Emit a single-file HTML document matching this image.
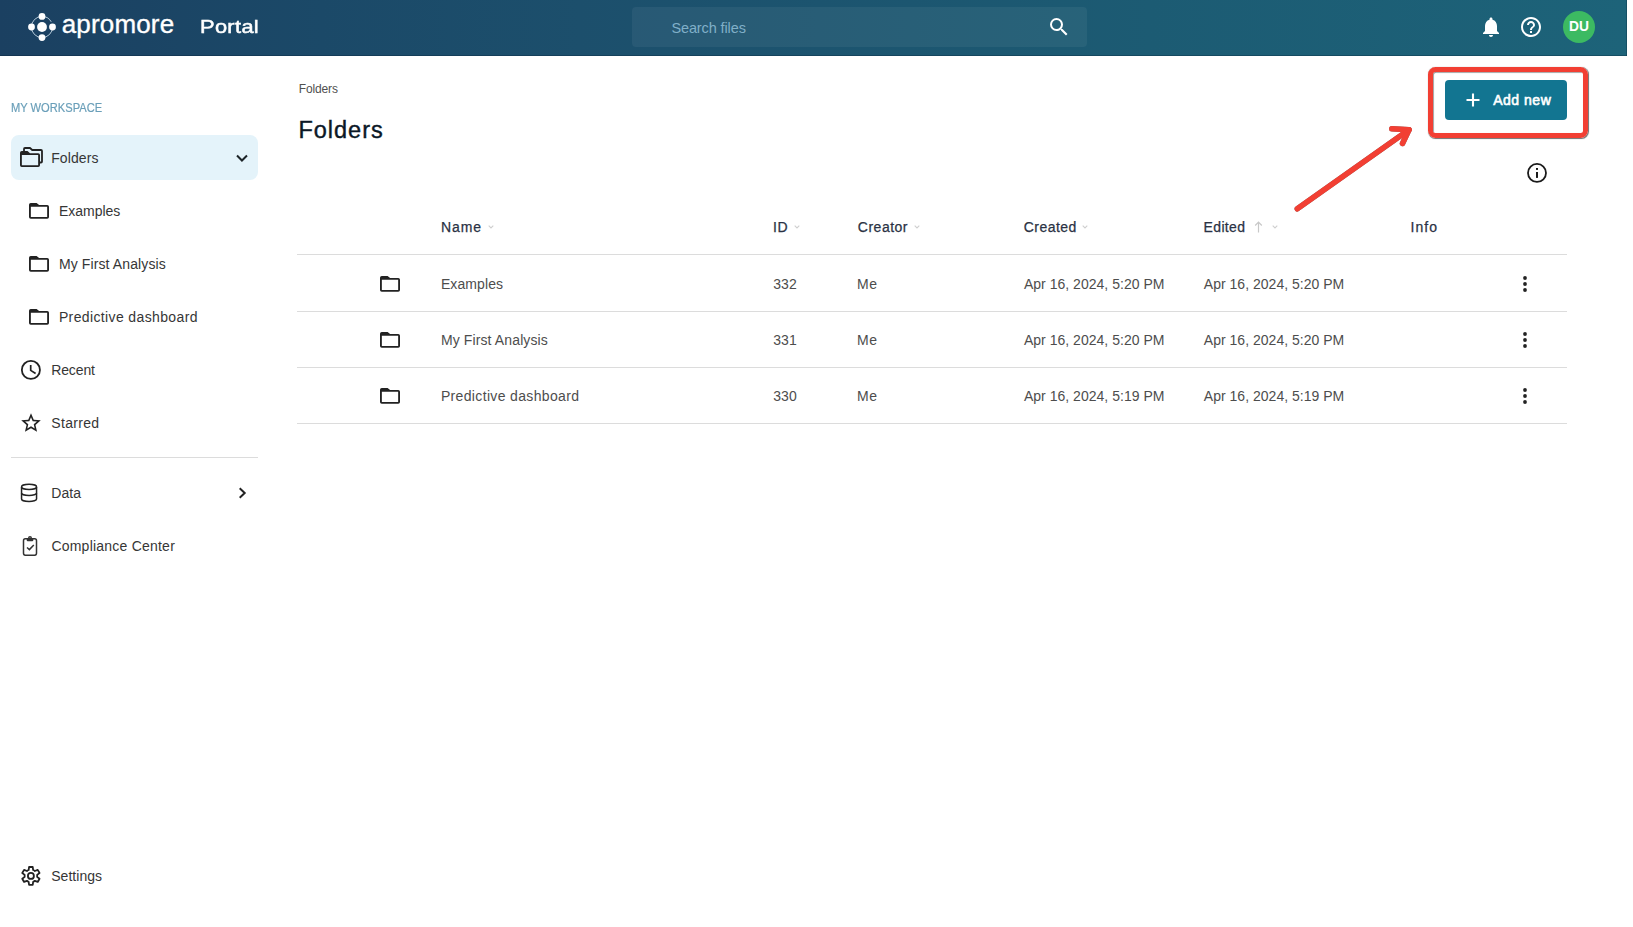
<!DOCTYPE html>
<html lang="en">
<head>
<meta charset="utf-8">
<title>Apromore Portal - Folders</title>
<style>
*{box-sizing:border-box;margin:0;padding:0}
html,body{width:1633px;height:927px;overflow:hidden;background:#fff}
body{font-family:"Liberation Sans",sans-serif;color:#3a3a3a;position:relative;font-size:14px}
.abs{position:absolute;white-space:nowrap;line-height:1}
#hdr{position:absolute;left:0;top:0;width:1627px;height:56px;background:linear-gradient(90deg,#1b4061 0%,#1b4968 19.700%,#1c4f6c 35.600%,#1c5b73 70.700%,#1d6379 100%);box-shadow:inset 0 -1px 0 rgba(0,20,40,.25),inset -1px 0 0 rgba(0,20,40,.25)}
#search{position:absolute;left:632px;top:7px;width:455px;height:40px;border-radius:4px;background:rgba(255,255,255,.055)}
.t{position:absolute;white-space:nowrap;line-height:20px;height:20px}
svg{position:absolute;overflow:visible}
.side{color:#363636;font-size:14px}
.row{color:#4d4d4d;font-size:14px}
.th{color:#2a3244;font-size:14px;-webkit-text-stroke:.250px #2a3244}
.hl{position:absolute;left:297px;width:1270px;height:1px;background:#dcdcdc}
</style>
</head>
<body>
<!-- HEADER -->
<div id="hdr"></div>
<div id="search"></div>
<!-- logo -->
<svg id="logo" style="left:28px;top:13px" width="28" height="28" viewBox="0 0 28 28">
 <circle cx="14" cy="14" r="10.6" fill="none" stroke="#dcecf7" stroke-width="0.8" stroke-dasharray="11.1 5.5 50" transform="rotate(-90 14 14)"/>
 <circle cx="14" cy="14" r="4.9" fill="#fff"/>
 <circle cx="14" cy="3.4" r="3.4" fill="#fff"/>
 <circle cx="14" cy="24.6" r="3.4" fill="#fff"/>
 <circle cx="3.5" cy="14" r="3.4" fill="#fff"/>
 <circle cx="24.5" cy="14" r="3.4" fill="#fff"/>
</svg>
<div class="t" id="brand" style="left:61.76px;top:9px;font-size:26px;line-height:30px;height:30px;color:#fff;-webkit-text-stroke:.350px #fff;letter-spacing:0.154px">apromore</div>
<div class="t" id="portal" style="left:200.100px;top:14.500px;font-size:19px;line-height:24px;height:24px;color:#fff;-webkit-text-stroke:.500px #fff;letter-spacing:.300px;transform:scaleX(1.148);transform-origin:0 0">Portal</div>
<div class="t" id="sfiles" style="left:671.42px;top:18px;font-size:14.500px;color:#80afc8;letter-spacing:-0.113px">Search files</div>
<svg id="isearch" style="left:1047px;top:15px" width="24" height="24" viewBox="0 0 24 24"><path fill="#fff" d="M15.5 14h-.79l-.28-.27A6.471 6.471 0 0 0 16 9.5 6.5 6.5 0 1 0 9.500 16c1.610 0 3.090-.590 4.230-1.570l.270.280v.790l5 4.990L20.490 19l-4.990-5zm-6 0C7.010 14 5 11.990 5 9.500S7.010 5 9.500 5 14 7.010 14 9.500 11.990 14 9.500 14z"/></svg>
<svg id="ibell" style="left:1479px;top:15px" width="24" height="24" viewBox="0 0 24 24"><path fill="#fff" d="M12 22c1.100 0 2-.900 2-2h-4c0 1.100.890 2 2 2zm6-6v-5c0-3.070-1.640-5.640-4.500-6.320V4c0-.830-.670-1.500-1.500-1.500s-1.500.670-1.500 1.500v.680C7.630 5.360 6 7.920 6 11v5l-2 2v1h16v-1l-2-2z"/></svg>
<svg id="ihelp" style="left:1519px;top:15px" width="24" height="24" viewBox="0 0 24 24"><path fill="#fff" d="M11 18h2v-2h-2v2zm1-16C6.480 2 2 6.480 2 12s4.480 10 10 10 10-4.480 10-10S17.520 2 12 2zm0 18c-4.410 0-8-3.590-8-8s3.590-8 8-8 8 3.590 8 8-3.590 8-8 8zm0-14c-2.210 0-4 1.790-4 4h2c0-1.100.900-2 2-2s2 .900 2 2c0 2-3 1.750-3 5h2c0-2.250 3-2.500 3-5 0-2.210-1.790-4-4-4z"/></svg>
<div id="avatar" style="position:absolute;left:1563px;top:11px;width:32px;height:32px;border-radius:50%;background:#3cba62"></div>
<div class="t" id="du" style="left:1563px;top:17.200px;width:32px;text-align:center;font-size:13.800px;font-weight:bold;color:#fff">DU</div>

<!-- SIDEBAR -->
<div class="t" id="myws" style="left:11.300px;top:97.650px;font-size:12.300px;transform:scaleX(.905);transform-origin:0 0;-webkit-text-stroke:.200px #6a9fb9;color:#6a9fb9">MY WORKSPACE</div>
<div id="selbg" style="position:absolute;left:11px;top:135px;width:247px;height:45px;border-radius:8px;background:#e4f3fa"></div>
<div class="t side" id="s1" style="left:51.14px;top:148px;letter-spacing:0.117px">Folders</div>
<div class="t side" id="s2" style="left:58.92px;top:201px;letter-spacing:-0.001px">Examples</div>
<div class="t side" id="s3" style="left:58.92px;top:254px;letter-spacing:0.116px">My First Analysis</div>
<div class="t side" id="s4" style="left:58.92px;top:307px;letter-spacing:0.372px">Predictive dashboard</div>
<div class="t side" id="s5" style="left:51.200px;top:360px;letter-spacing:-0.11px">Recent</div>
<div class="t side" id="s6" style="left:51.36px;top:413px;letter-spacing:0.29px">Starred</div>
<div id="sdiv" style="position:absolute;left:11px;top:457px;width:247px;height:1px;background:#dcdcdc"></div>
<div class="t side" id="s7" style="left:51.200px;top:483px;letter-spacing:0.084px">Data</div>
<div class="t side" id="s8" style="left:51.400px;top:536px;letter-spacing:0.223px">Compliance Center</div>
<div class="t side" id="s9" style="left:51.22px;top:866px;letter-spacing:0.029px">Settings</div>


<!-- ICONS -->
<svg id="ifolders" style="left:20px;top:147px" width="23" height="20" viewBox="0 0 23 20">
 <path fill="none" stroke="#222" stroke-width="1.8" stroke-linejoin="round" d="M4 4V2A1 1 0 0 1 5 1H10L12.200 3H21A1 1 0 0 1 22 4V14.500A1 1 0 0 1 21 15.500H20"/>
 <path fill="#222" fill-rule="evenodd" d="M1.800 4H7.500L10 6.200H18.200A1.800 1.800 0 0 1 20 8V18.200A1.800 1.800 0 0 1 18.200 20H1.800A1.800 1.800 0 0 1 0 18.200V5.800A1.800 1.800 0 0 1 1.800 4ZM1.850 8V18.150H18.150V8Z"/>
</svg>
<svg id="if1" style="left:29px;top:203px" width="20" height="16" viewBox="0 0 20 16"><path fill="#222" fill-rule="evenodd" d="M1.8 0H7.6L10.1 2H18.2A1.8 1.8 0 0 1 20 3.800V13.900A1.800 1.800 0 0 1 18.2 15.700H1.800A1.800 1.800 0 0 1 0 13.900V1.800A1.800 1.800 0 0 1 1.800 0ZM1.850 3.800V13.900H18.150V3.800Z"/></svg>
<svg id="if2" style="left:29px;top:256px" width="20" height="16" viewBox="0 0 20 16"><path fill="#222" fill-rule="evenodd" d="M1.8 0H7.6L10.1 2H18.2A1.8 1.8 0 0 1 20 3.800V13.900A1.800 1.800 0 0 1 18.2 15.700H1.800A1.800 1.800 0 0 1 0 13.900V1.800A1.800 1.800 0 0 1 1.800 0ZM1.850 3.800V13.900H18.150V3.800Z"/></svg>
<svg id="if3" style="left:29px;top:309px" width="20" height="16" viewBox="0 0 20 16"><path fill="#222" fill-rule="evenodd" d="M1.8 0H7.6L10.1 2H18.2A1.8 1.8 0 0 1 20 3.800V13.900A1.800 1.800 0 0 1 18.2 15.700H1.800A1.800 1.800 0 0 1 0 13.900V1.800A1.800 1.800 0 0 1 1.800 0ZM1.850 3.800V13.900H18.150V3.800Z"/></svg>
<svg id="iclock" style="left:20px;top:359px" width="22" height="22" viewBox="0 0 22 22"><circle cx="10.900" cy="10.900" r="9.050" fill="none" stroke="#222" stroke-width="1.800"/><path d="M10.700 6V11.400L15.600 14.500" fill="none" stroke="#222" stroke-width="1.700"/></svg>
<svg id="istar" style="left:19px;top:411px" width="24" height="24" viewBox="0 0 24 24"><path transform="translate(12 12) scale(.98) translate(-12 -12)" fill="#222" d="M22 9.240l-7.190-.620L12 2 9.190 8.630 2 9.240l5.460 4.730L5.820 21 12 17.270 18.180 21l-1.630-7.030L22 9.240zM12 15.400l-3.760 2.270 1-4.280-3.320-2.880 4.380-.380L12 6.100l1.710 4.040 4.380.380-3.320 2.880 1 4.280L12 15.400z"/></svg>
<svg id="idata" style="left:20px;top:483px" width="18" height="20" viewBox="0 0 18 20"><g fill="none" stroke="#222" stroke-width="1.500"><ellipse cx="9.050" cy="3.900" rx="7.500" ry="2.550"/><path d="M1.550 3.900V15.900A7.500 2.550 0 0 0 16.550 15.900V3.900"/><path d="M1.550 9.900A7.500 2.550 0 0 0 16.550 9.900"/></g></svg>
<svg id="iclip" style="left:22px;top:535px" width="16" height="22" viewBox="0 0 16 22"><rect x="1.500" y="3.850" width="13" height="16.300" rx="1.800" fill="none" stroke="#333" stroke-width="1.500"/><path fill="#333" fill-rule="evenodd" d="M8 1A2 2 0 0 1 10 3L11.300 3.800V5.200A1.100 1.100 0 0 1 10.200 6.300H5.800A1.100 1.100 0 0 1 4.700 5.200V3.800L6 3A2 2 0 0 1 8 1ZM8 2.500A.75.750 0 1 0 8 4 .75.750 0 1 0 8 2.500Z"/><path d="M5 12.500L7.400 14.600L11.800 10" fill="none" stroke="#333" stroke-width="1.500"/></svg>
<svg id="igear" style="left:20px;top:865px" width="22" height="22" viewBox="-11 -11 22 22"><g transform="translate(-.1 -.1)" fill="none" stroke="#222" stroke-width="1.800" stroke-linejoin="round"><path d="M-2.26 -5.88L-1.81 -8.92L1.81 -8.92L2.26 -5.88A6.3 6.3 0 0 1 3.96 -4.90L6.82 -6.03L8.63 -2.89L6.22 -0.99A6.3 6.3 0 0 1 6.22 0.99L8.63 2.89L6.82 6.03L3.96 4.90A6.3 6.3 0 0 1 2.26 5.88L1.81 8.92L-1.81 8.92L-2.26 5.88A6.3 6.3 0 0 1 -3.96 4.90L-6.82 6.03L-8.63 2.89L-6.22 0.99A6.3 6.3 0 0 1 -6.22 -0.99L-8.63 -2.89L-6.82 -6.03L-3.96 -4.90A6.3 6.3 0 0 1 -2.26 -5.88Z"/><circle r="3"/></g></svg>
<svg id="ichevd" style="left:235px;top:153px" width="14" height="10" viewBox="0 0 14 10"><path d="M2 2.500L6.950 7.500L12 2.500" fill="none" stroke="#1c2428" stroke-width="2"/></svg>
<svg id="ichevr" style="left:236px;top:486px" width="10" height="14" viewBox="0 0 10 14"><path d="M3.700 2.200L8.700 7L3.700 11.800" fill="none" stroke="#222" stroke-width="2"/></svg>
<svg id="iinfo" style="left:1526px;top:162px" width="22" height="22" viewBox="0 0 22 22"><circle cx="11" cy="10.900" r="9" fill="none" stroke="#1a1a1a" stroke-width="1.800"/><rect x="10" y="6" width="2" height="1.900" fill="#1a1a1a"/><rect x="10" y="10" width="2" height="5.900" fill="#1a1a1a"/></svg>
<svg id="tf1" style="left:380px;top:276px" width="20" height="16" viewBox="0 0 20 16"><path fill="#222" fill-rule="evenodd" d="M1.8 0H7.6L10.1 2H18.2A1.8 1.8 0 0 1 20 3.800V13.900A1.800 1.800 0 0 1 18.2 15.700H1.800A1.800 1.800 0 0 1 0 13.900V1.800A1.800 1.800 0 0 1 1.800 0ZM1.850 3.800V13.900H18.150V3.800Z"/></svg>
<svg id="tf2" style="left:380px;top:332px" width="20" height="16" viewBox="0 0 20 16"><path fill="#222" fill-rule="evenodd" d="M1.8 0H7.6L10.1 2H18.2A1.8 1.8 0 0 1 20 3.800V13.900A1.800 1.800 0 0 1 18.2 15.700H1.800A1.800 1.800 0 0 1 0 13.900V1.800A1.800 1.800 0 0 1 1.800 0ZM1.850 3.800V13.900H18.150V3.800Z"/></svg>
<svg id="tf3" style="left:380px;top:388px" width="20" height="16" viewBox="0 0 20 16"><path fill="#222" fill-rule="evenodd" d="M1.8 0H7.6L10.1 2H18.2A1.8 1.8 0 0 1 20 3.800V13.900A1.800 1.800 0 0 1 18.2 15.700H1.800A1.800 1.800 0 0 1 0 13.900V1.800A1.800 1.800 0 0 1 1.800 0ZM1.850 3.800V13.900H18.150V3.800Z"/></svg>
<svg id="k1" style="left:1521px;top:276px" width="8" height="16" viewBox="0 0 8 16"><circle cx="4" cy="2" r="1.9" fill="#222"/><circle cx="4" cy="8" r="1.9" fill="#222"/><circle cx="4" cy="14" r="1.900" fill="#222"/></svg>
<svg id="k2" style="left:1521px;top:332px" width="8" height="16" viewBox="0 0 8 16"><circle cx="4" cy="2" r="1.9" fill="#222"/><circle cx="4" cy="8" r="1.9" fill="#222"/><circle cx="4" cy="14" r="1.900" fill="#222"/></svg>
<svg id="k3" style="left:1521px;top:388px" width="8" height="16" viewBox="0 0 8 16"><circle cx="4" cy="2" r="1.9" fill="#222"/><circle cx="4" cy="8" r="1.9" fill="#222"/><circle cx="4" cy="14" r="1.900" fill="#222"/></svg>
<svg id="c1" style="left:488px;top:225px" width="6" height="4" viewBox="0 0 6 4"><path d="M0.700 0.700L3 2.900L5.300 0.700" fill="none" stroke="#cfcfcf" stroke-width="1.1"/></svg>
<svg id="c2" style="left:794px;top:225px" width="6" height="4" viewBox="0 0 6 4"><path d="M0.700 0.700L3 2.900L5.300 0.700" fill="none" stroke="#cfcfcf" stroke-width="1.1"/></svg>
<svg id="c3" style="left:914px;top:225px" width="6" height="4" viewBox="0 0 6 4"><path d="M0.700 0.700L3 2.900L5.300 0.700" fill="none" stroke="#cfcfcf" stroke-width="1.1"/></svg>
<svg id="c4" style="left:1082px;top:225px" width="6" height="4" viewBox="0 0 6 4"><path d="M0.700 0.700L3 2.900L5.300 0.700" fill="none" stroke="#cfcfcf" stroke-width="1.1"/></svg>
<svg id="c5" style="left:1272px;top:225px" width="6" height="4" viewBox="0 0 6 4"><path d="M0.700 0.700L3 2.900L5.300 0.700" fill="none" stroke="#cfcfcf" stroke-width="1.1"/></svg>
<svg id="iup" style="left:1254px;top:221px" width="9" height="12" viewBox="0 0 9 12"><path d="M4.500 11.500V1.200M1.200 4.500L4.500 1.200L7.800 4.500" fill="none" stroke="#c8c8c8" stroke-width="1.200"/></svg>

<!-- MAIN -->
<div class="t" id="crumb" style="color:#505050;left:298.73px;top:79px;font-size:12px;letter-spacing:-0.138px">Folders</div>
<div class="t" id="title" style="left:298.400px;top:114.700px;font-size:23.500px;line-height:30px;height:30px;color:#0b1826;-webkit-text-stroke:.400px #0b1826;letter-spacing:1px">Folders</div>

<div id="addbtn" style="position:absolute;left:1445px;top:80px;width:122px;height:40px;border-radius:4px;background:#127591"></div>
<svg id="iplus" style="left:1465.900px;top:93px" width="14" height="14" viewBox="0 0 14 14"><path d="M7 0.500V13.500M0.500 7H13.500" stroke="#fff" stroke-width="2.100" fill="none"/></svg>
<div class="t" id="addtxt" style="left:1493.200px;top:90px;font-size:14px;color:#fff;-webkit-text-stroke:.600px #fff;letter-spacing:.520px">Add new</div>

<div class="t th" id="h1" style="left:441.0px;top:217px;letter-spacing:0.871px">Name</div>
<div class="t th" id="h2" style="left:773.05px;top:217px;letter-spacing:0.481px">ID</div>
<div class="t th" id="h3" style="left:857.82px;top:217px;letter-spacing:0.504px">Creator</div>
<div class="t th" id="h4" style="left:1023.73px;top:217px;letter-spacing:0.456px">Created</div>
<div class="t th" id="h5" style="left:1203.57px;top:217px;letter-spacing:0.358px">Edited</div>
<div class="t th" id="h6" style="left:1410.49px;top:217px;letter-spacing:1.104px">Info</div>
<div class="hl" style="top:254px"></div>
<div class="hl" style="top:311px"></div>
<div class="hl" style="top:367px"></div>
<div class="hl" style="top:423px"></div>

<div class="t row" id="r1a" style="left:440.92px;top:274px;letter-spacing:0.093px">Examples</div>
<div class="t row" id="r1b" style="left:773.200px;top:274px;letter-spacing:.100px">332</div>
<div class="t row" id="r1c" style="left:857px;top:274px;letter-spacing:.600px">Me</div>
<div class="t row" id="r1d" style="left:1023.92px;top:274px;letter-spacing:0.023px">Apr 16, 2024, 5:20 PM</div>
<div class="t row" id="r1e" style="left:1203.81px;top:274px;letter-spacing:0.02px">Apr 16, 2024, 5:20 PM</div>

<div class="t row" id="r2a" style="left:440.92px;top:330px;letter-spacing:0.12px">My First Analysis</div>
<div class="t row" id="r2b" style="left:773.200px;top:330px;letter-spacing:.100px">331</div>
<div class="t row" id="r2c" style="left:857px;top:330px;letter-spacing:.600px">Me</div>
<div class="t row" id="r2d" style="left:1023.92px;top:330px;letter-spacing:0.023px">Apr 16, 2024, 5:20 PM</div>
<div class="t row" id="r2e" style="left:1203.81px;top:330px;letter-spacing:0.02px">Apr 16, 2024, 5:20 PM</div>

<div class="t row" id="r3a" style="left:440.92px;top:386px;letter-spacing:0.345px">Predictive dashboard</div>
<div class="t row" id="r3b" style="left:773.200px;top:386px;letter-spacing:.100px">330</div>
<div class="t row" id="r3c" style="left:857px;top:386px;letter-spacing:.600px">Me</div>
<div class="t row" id="r3d" style="left:1023.92px;top:386px;letter-spacing:0.023px">Apr 16, 2024, 5:19 PM</div>
<div class="t row" id="r3e" style="left:1203.81px;top:386px;letter-spacing:0.02px">Apr 16, 2024, 5:19 PM</div>

<!-- ANNOTATION -->
<div id="redbox" style="position:absolute;left:1428px;top:67px;width:160.200px;height:71.100px;border:5.200px solid #f23f33;border-radius:7.500px;box-shadow:.800px .800px .800px rgba(0,0,0,.55), inset .800px .800px .800px rgba(0,0,0,.45)"></div>
<svg id="arrow" style="left:1280px;top:110px;filter:drop-shadow(.800px .800px .500px rgba(0,0,0,.55))" width="150" height="115" viewBox="1280 110 150 115"><g fill="none" stroke="#f23f33" stroke-width="5.500" stroke-linecap="round" stroke-linejoin="round"><path d="M1297.300 208.800L1409 129.800"/><path d="M1391.800 128.800L1409 129.800L1402.500 143.500"/></g></svg>
</body>
</html>
